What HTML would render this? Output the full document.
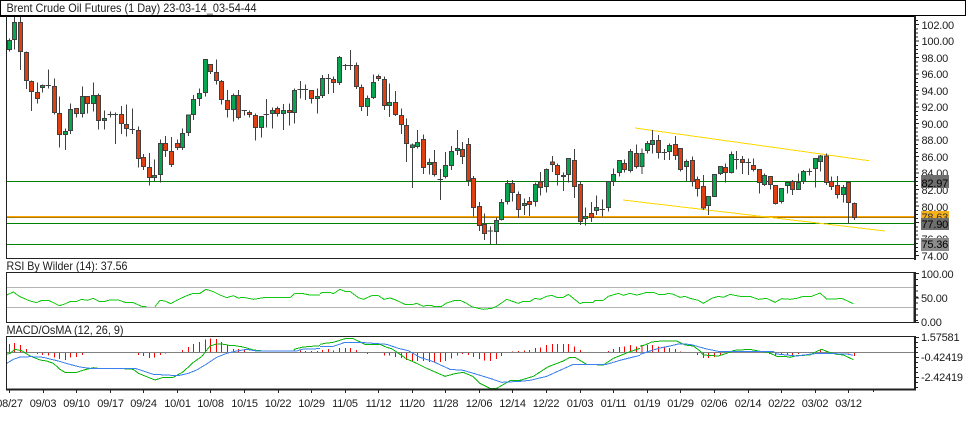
<!DOCTYPE html>
<html>
<head>
<meta charset="utf-8">
<style>
html,body{margin:0;padding:0;background:#fff;width:966px;height:429px;overflow:hidden}
svg{position:absolute;left:0;top:0;display:block}
text{font-family:"Liberation Sans",Arial,sans-serif;font-size:11px;letter-spacing:-.2px;fill:#1c1c1c}
</style>
</head>
<body>
<svg width="966" height="429" viewBox="0 0 966 429" xmlns="http://www.w3.org/2000/svg">
<rect width="966" height="429" fill="#fff"/>

<!-- horizontal levels -->
<g shape-rendering="crispEdges" fill="none">
<path d="M7 181.5H914M7 223.5H914M7 244.5H914" stroke="#008000"/>
<path d="M7 216.5H914" stroke="#ffa500"/>
<path d="M7 217.5H914" stroke="#a87a10"/>
<path d="M635 128L869 160.7" stroke="#ffd700"/>
<path d="M623 200L885 231" stroke="#ffd700"/>
<path d="M7 287.5H914M7 307.5H914" stroke="#b4b4b4"/>
</g>

<!-- candles -->
<g transform="scale(.333333)" stroke="#404040" stroke-width="3" fill="none" shape-rendering="crispEdges">
<g>
<path d="M28 115V155M43 50V148M61 50V210M79 155V267M94 241V333M112 247V310M127 253V277M145 208V265M137 257H153M163 235V344M178 289V443M196 385V450M211 310V402M229 325V352M247 259V352M262 289V340M280 247V335M295 280V388M313 331V388M331 335V352M323 343H339M346 338V432M338 343H354M364 318V402M379 313V410M397 325V402M389 388H405M415 380V503M430 462V510M448 459V557M463 478V543M481 418V548M496 408V471M514 411V501M532 418V450M547 385V450M565 345V408M580 285V360M598 265V318M616 178V290M631 193V222M649 178V254M664 240V313M682 270V352M700 280V365M715 270V358M733 331V346M725 331H741M748 331V352M766 340V422M784 349V413M799 297V382M791 343H807M817 322V386M832 320V349M850 312V390M868 310V376M883 265V370M901 243V295M893 268H909M916 253V300M908 268H924M934 271V310M952 265V340"/>
<path fill="#08a551" d="M22 121H34V149H22ZM37 67H49V118H37ZM121 256H133V262H121ZM190 394H202V403H190ZM205 328H217V391H205ZM241 289H253V341H241ZM274 286H286V310H274ZM307 355H319V361H307ZM457 526H469V532H457ZM475 430H487V523H475ZM541 400H553V442H541ZM559 345H571V397H559ZM574 298H586V343H574ZM592 280H604V296H592ZM610 178H622V277H610ZM694 286H706V328H694ZM778 349H790V382H778ZM811 331H823V340H811ZM844 331H856V340H844ZM877 271H889V337H877ZM946 289H958V295H946Z"/>
<path fill="#e04010" d="M55 67H67V155H55ZM73 157H85V241H73ZM88 244H100V274H88ZM106 277H118V296H106ZM157 259H169V337H157ZM172 340H184V403H172ZM223 325H235V341H223ZM256 289H268V310H256ZM289 286H301V361H289ZM358 343H370V370H358ZM373 373H385V385H373ZM409 391H421V475H409ZM424 472H436V499H424ZM442 502H454V532H442ZM490 430H502V451H490ZM508 454H520V493H508ZM526 430H538V442H526ZM625 193H637V214H625ZM643 217H655V241H643ZM658 244H670V298H658ZM676 301H688V328H676ZM709 286H721V352H709ZM742 337H754V343H742ZM760 346H772V382H760ZM826 325H838V340H826ZM862 331H874V337H862ZM928 271H940V295H928Z"/>
</g>
<g transform="translate(960,0)">
<path d="M7 225V294M25 222V282M17 235H33M40 230V279M58 168V255M76 192V210M68 196H84M91 150V210M83 196H99M109 187V267M124 253V333M142 286V348M160 223V297M175 223V243M193 229V330M208 250V351M226 273V348M244 325V402M259 355V486M277 430V564M292 390V446M310 403V522M328 475V523M343 450V530M361 507V600M353 538H369M376 456V535M394 438V510M412 390V465M427 426V492M445 414V558M460 528V650M478 606V693M493 640V720M511 680V732M503 693H519M529 653V733M544 597V662M562 540V614M577 540V604M595 574V653M613 595V645M628 591V648M646 548V620M661 516V587M679 505V577M697 468V516M712 490V557M730 517V573M745 475V548M763 447V594M781 545V675M796 622V677M814 606V666M829 586V645M847 598V649M839 628H855M865 544V635M880 505V558M898 480V530M913 478V518M931 447V517M949 433V505"/>
<path fill="#08a551" d="M1 235H13V286H1ZM52 172H64V247H52ZM136 295H148V319H136ZM154 247H166V292H154ZM202 307H214V316H202ZM271 435H283V442H271ZM286 428H298V439H286ZM322 487H334V493H322ZM370 496H382V529H370ZM388 454H400V497H388ZM406 445H418V451H406ZM523 661H535V695H523ZM538 607H550V659H538ZM556 550H568V604H556ZM607 610H619V617H607ZM640 553H652V604H640ZM673 508H685V559H673ZM724 526H736V529H724ZM739 475H751V523H739ZM790 649H802V655H790ZM823 622H835V631H823ZM859 544H871V622H859ZM874 523H886V544H874ZM892 481H904V517H892ZM925 454H937V511H925Z"/>
<path fill="#e04010" d="M34 238H46V247H34ZM103 196H115V259H103ZM118 262H130V319H118ZM169 229H181V235H169ZM187 238H199V316H187ZM220 307H232V343H220ZM238 346H250V373H238ZM253 376H265V430H253ZM304 418H316V502H304ZM337 487H349V523H337ZM421 448H433V469H421ZM439 433H451V541H439ZM454 535H466V623H454ZM472 619H484V677H472ZM487 673H499V700H487ZM571 550H583V577H571ZM589 583H601V628H589ZM622 604H634V613H622ZM655 546H667V562H655ZM691 486H703V493H691ZM706 496H718V523H706ZM757 481H769V559H757ZM775 553H787V664H775ZM808 640H820V652H808ZM907 490H919V509H907ZM943 460H955V499H943Z"/>
</g>
<g transform="translate(1920,390)">
<path d="M6 55V132M22 33V71M37 0V70M55 15V85M73 57V90M65 68H81M88 40V90M106 18V90M121 55V125M139 88V153M157 80V170M172 140V200M190 135V240M205 199V255M223 133V201M241 108V135M256 100V158M274 65V130M289 63V118M281 88H297M307 78V132M325 85V135M317 97H333M340 85V125M358 118V190M373 130V168M391 138V178M406 166V224M424 175V220M442 154V190M457 150V195M475 130V180M490 120V162M508 115V137M500 124H516M526 85V172M541 75V125M559 70V165M574 140V180M592 138V205M610 165V218M625 154V280M643 218V270"/>
<path fill="#08a551" d="M0 70H12V110H0ZM16 40H28V61H16ZM31 31H43V43H31ZM82 46H94V64H82ZM133 94H145V109H133ZM199 199H211V227H199ZM217 133H229V199H217ZM235 109H247V130H235ZM268 73H280V127H268ZM367 136H379V163H367ZM418 175H430V214H418ZM436 157H448V166H436ZM469 157H481V178H469ZM484 124H496V154H484ZM520 85H532V115H520ZM535 78H547V94H535ZM604 172H616V193H604Z"/>
<path fill="#e04010" d="M49 31H61V67H49ZM100 43H112V76H100ZM115 55H127V118H115ZM151 91H163V154H151ZM166 148H178V175H166ZM184 169H196V234H184ZM250 112H262V127H250ZM301 88H313V97H301ZM334 106H346V118H334ZM352 118H364V157H352ZM385 140H397V163H385ZM400 166H412V220H400ZM451 154H463V178H451ZM553 78H565V157H553ZM568 154H580V169H568ZM586 166H598V193H586ZM619 157H631V217H619ZM637 220H649V262H637Z"/>
</g>

<!-- RSI -->
<g transform="translate(0,765)" stroke="#10c810">
<path d="M20 120L40 111L60 125L90 138L110 143L125 136L145 136L160 143L178 152L195 147L212 139L230 139L245 133L262 136L280 130L297 139L315 139L330 135L355 135L375 142L400 143L425 154L440 155M465 155L480 136L495 138L512 146L530 136L560 122L580 115L600 115L618 103L640 110L660 120L680 128L700 122L715 129L730 127L760 133L790 128L870 128L885 115L905 115L930 120L960 120"/>
<path transform="translate(960,0)" d="M0 116L8 112L30 112L40 116L60 103L75 109L90 109L115 128L130 133L155 122L175 122L192 133L210 129L225 134L255 148L280 148L290 145L310 154L320 151L335 151L340 154L365 154L380 144L405 136L420 136L440 145L455 155L475 160L490 163L515 160L530 154L560 133L595 145L610 139L630 139L645 130L660 133L680 124L695 121L710 127L730 127L745 118L780 146L790 142L820 142L825 136L850 136L865 124L895 115L910 121L930 115L950 120L960 118"/>
<path transform="translate(1920,0)" d="M0 118L20 112L40 112L55 118L75 118L85 115L100 118L120 127L135 124L150 130L175 136L190 145L215 130L235 124L250 127L270 118L300 124L330 124L355 133L380 130L405 142L425 131L450 133L470 130L490 124L515 124L540 114L560 132L585 132L605 130L640 146"/>
</g>

<!-- MACD histogram -->
<g transform="translate(0,975)" stroke="#f00">
<path d="M28 82V57M43 82V54M61 82V60M79 82V72M112 82V87M127 82V90M145 82V92M163 82V97M178 82V102M196 82V105M211 82V98M229 82V96M247 82V90M415 82V90M430 82V93M448 82V99M463 82V98M481 82V90M496 82V86M547 82V75M565 82V66M580 82V57M598 82V51M616 82V43M631 82V40M649 82V42M664 82V51M682 82V61M700 82V72M715 82V72M733 82V75M901 82V75M916 82V78M934 82V78M952 82V78"/>
<path transform="translate(960,0)" d="M7 82V75M25 82V72M40 82V76M58 82V69M76 82V69M91 82V69M109 82V75M142 82V87M193 82V91M208 82V91M226 82V96M244 82V99M259 82V105M277 82V108M292 82V108M310 82V108M328 82V111M343 82V111M361 82V111M376 82V108M394 82V100M412 82V91M427 82V87M445 82V90M460 82V96M478 82V102M493 82V107M511 82V108M529 82V102M544 82V93M577 82V79M595 82V78M613 82V76M628 82V75M646 82V69M661 82V67M679 82V60M697 82V57M712 82V57M730 82V57M745 82V57M763 82V64M781 82V75M865 82V78M880 82V72M898 82V66M913 82V64M931 82V60M949 82V64"/>
<path transform="translate(1920,0)" d="M6 82V60M22 82V60M37 82V60M55 82V64M73 82V66M88 82V69M106 82V72M121 82V79M172 82V90M190 82V99M205 82V99M223 82V96M241 82V90M388 82V87M406 82V91M424 82V90M442 82V88M457 82V90M475 82V87M526 82V79M541 82V73M559 82V79M625 82V85M643 82V93"/>
<path d="M21 82H2745" stroke="#808080"/>
<g stroke="#08b408">
<path d="M20 88L30 85L45 73L65 77L85 90L100 97L120 105L140 108L160 115L180 133L195 142L230 142L255 134L280 128L300 131L340 131L370 131L400 133L415 145L465 165L490 157L520 157L550 140L580 112L605 95L630 63L650 57L675 58L690 62L705 62L730 66L760 75L790 78L880 78L885 72L910 66L960 62"/>
<path transform="translate(960,0)" d="M0 58L15 55L40 52L75 41L100 41L135 58L180 58L200 67L215 71L240 88L260 102L290 115L320 130L350 143L375 154L405 146L430 142L460 155L480 175L510 190L530 190L570 167L600 166L640 154L685 125L730 108L750 97L765 97L800 118L850 120L880 100L930 80L960 70"/>
<path transform="translate(1920,0)" d="M0 63L15 60L35 51L65 48L110 48L135 60L160 63L180 78L190 90L235 93L260 85L283 76L330 73L360 79L385 82L410 94L435 94L450 97L470 92L510 90L530 79L545 73L565 81L590 88L610 90L640 104"/>
</g>
<g stroke="#3a80ee">
<path d="M20 115L40 103L60 96L95 95L130 97L150 102L175 108L205 117L240 126L270 130L405 130L430 138L460 148L535 152L565 145L590 135L620 117L650 97L680 85L700 80L740 73L770 78L890 78L910 72L940 72L960 70"/>
<path transform="translate(960,0)" d="M0 65L40 64L75 52L120 52L160 55L200 58L235 70L265 77L300 97L340 110L390 133L430 136L470 148L510 160L545 172L600 169L630 166L680 154L720 136L760 118L860 118L900 106L960 91"/>
<path transform="translate(1920,0)" d="M0 88L30 78L60 69L90 63L115 57L150 58L200 72L235 79L400 79L410 87L470 93L515 87L540 85L620 87L640 91"/>
</g>
</g>
</g>

<!-- frames and axes -->
<g shape-rendering="crispEdges" fill="none" stroke="#222">
<path d="M.5 .5H965.5V15.5H.5Z" stroke="#000"/>
<path d="M0 16.5H915" stroke="#000"/>
<path d="M6.5 16V258.5H915"/>
<path d="M6.5 272.5H914V322.5H6.5Z"/>
<path d="M6.5 336.5H914"/>
<path d="M6.5 336V389"/>
<path d="M6 389.5H916" stroke-width="2"/>
<path d="M915 16V260M915 272V323M915 336V390" stroke-width="2"/>
<path d="M917 20V258" stroke-width="4" stroke-dasharray="1 15.5" stroke-dashoffset="-4"/>
<path d="M916.5 20V258" stroke-width="3" stroke-dasharray="1 3.125" stroke-dashoffset="0"/>
<path d="M917 273V323" stroke-width="4" stroke-dasharray="1 23.5"/>
<path d="M916.5 273V323" stroke-width="3" stroke-dasharray="1 4.9"/>
<path d="M917 337V389" stroke-width="4" stroke-dasharray="1 19"/>
<path d="M916.5 337V389" stroke-width="3" stroke-dasharray="1 4"/>
<path d="M9.5 390V393M43.5 390V393M76.5 390V393M110.5 390V393M143.5 390V393M177.5 390V393M210.5 390V393M244.5 390V393M278.5 390V393M311.5 390V393M345.5 390V393M378.5 390V393M412.5 390V393M445.5 390V393M479.5 390V393M512.5 390V393M546.5 390V393M580.5 390V393M613.5 390V393M647.5 390V393M680.5 390V393M714.5 390V393M748.5 390V393M781.5 390V393M815.5 390V393M848.5 390V393M873.5 390V392"/>
</g>

<!-- titles -->
<text x="6.5" y="12" style="font-size:12px;letter-spacing:0" textLength="250" lengthAdjust="spacingAndGlyphs">Brent Crude Oil Futures (1 Day) 23-03-14_03-54-44</text>
<text x="6.5" y="270" style="font-size:12px;letter-spacing:0" textLength="121" lengthAdjust="spacingAndGlyphs">RSI By Wilder (14): 37.56</text>
<text x="6.5" y="334" style="font-size:12px;letter-spacing:0" textLength="117" lengthAdjust="spacingAndGlyphs">MACD/OsMA (12, 26, 9)</text>

<!-- price axis -->
<text x="921.5" y="29">102.00</text>
<text x="921.5" y="45">100.00</text>
<text x="921.5" y="62">98.00</text>
<text x="921.5" y="78">96.00</text>
<text x="921.5" y="95">94.00</text>
<text x="921.5" y="111">92.00</text>
<text x="921.5" y="128">90.00</text>
<text x="921.5" y="144">88.00</text>
<text x="921.5" y="161">86.00</text>
<text x="921.5" y="177">84.00</text>
<text x="921.5" y="194">82.00</text>
<text x="921.5" y="211">80.00</text>
<text x="921.5" y="227">78.00</text>
<text x="921.5" y="243">76.00</text>
<text x="921.5" y="260">74.00</text>

<rect x="921" y="175" width="28" height="13" fill="#6e6e6e" shape-rendering="crispEdges"/>
<text x="921.5" y="187" style="fill:#000">82.97</text>
<rect x="921" y="211" width="28" height="13" fill="#f7b21a" shape-rendering="crispEdges"/>
<text x="921.5" y="221" style="fill:#333">78.63</text>
<rect x="921" y="218" width="28" height="12" fill="#6e6e6e" shape-rendering="crispEdges"/>
<text x="921.5" y="228" style="fill:#000">77.90</text>
<rect x="921" y="238" width="28" height="13" fill="#8c8c8c" shape-rendering="crispEdges"/>
<text x="921.5" y="248" style="fill:#000">75.36</text>

<!-- RSI axis -->
<text x="921" y="278">100.00</text>
<text x="921" y="302">50.00</text>
<text x="921" y="326">0.00</text>

<!-- MACD axis -->
<text x="921" y="341">1.57581</text>
<text x="921" y="361">-0.42419</text>
<text x="921" y="381">-2.42419</text>

<!-- dates -->
<g text-anchor="middle">
<text x="9.5" y="407">08/27</text>
<text x="43" y="407">09/03</text>
<text x="76.5" y="407">09/10</text>
<text x="110.5" y="407">09/17</text>
<text x="143.5" y="407">09/24</text>
<text x="177.5" y="407">10/01</text>
<text x="210.5" y="407">10/08</text>
<text x="244.5" y="407">10/15</text>
<text x="278" y="407">10/22</text>
<text x="311.5" y="407">10/29</text>
<text x="345" y="407">11/05</text>
<text x="378.5" y="407">11/12</text>
<text x="412" y="407">11/20</text>
<text x="445.5" y="407">11/28</text>
<text x="479" y="407">12/06</text>
<text x="512.5" y="407">12/14</text>
<text x="546" y="407">12/22</text>
<text x="580" y="407">01/03</text>
<text x="613.5" y="407">01/11</text>
<text x="647" y="407">01/19</text>
<text x="680.5" y="407">01/29</text>
<text x="714" y="407">02/06</text>
<text x="748" y="407">02/14</text>
<text x="781.5" y="407">02/22</text>
<text x="815" y="407">03/02</text>
<text x="848.5" y="407">03/12</text>
</g>
</svg>
</body>
</html>
